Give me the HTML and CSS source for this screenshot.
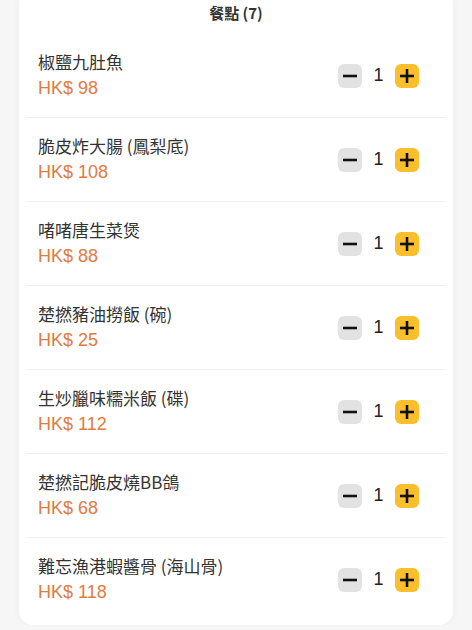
FILE: index.html
```html
<!DOCTYPE html>
<html lang="zh-Hant">
<head>
    <meta charset="UTF-8">
    <meta name="viewport" content="width=device-width, initial-scale=1.0">
    <title>餐點</title>
    <link rel="stylesheet" href="styles.css">
</head>
<body>
    <div class="card">
        <div class="card-title">餐點 (7)</div>
        <div class="item-list">
            <div class="item">
                <div class="item-info">
                    <div class="item-name">椒鹽九肚魚</div>
                    <div class="item-price">HK$ 98</div>
                </div>
                <div class="qty">
                    <button class="qty-btn minus"><svg width="14" height="14" viewBox="0 0 14 14"><line x1="0" y1="7" x2="14" y2="7"/></svg></button>
                    <span class="qty-num">1</span>
                    <button class="qty-btn plus"><svg width="14" height="14" viewBox="0 0 14 14"><line x1="0" y1="7" x2="14" y2="7"/><line x1="7" y1="0" x2="7" y2="14"/></svg></button>
                </div>
            </div>
            <div class="item">
                <div class="item-info">
                    <div class="item-name">脆皮炸大腸 (鳳梨底)</div>
                    <div class="item-price">HK$ 108</div>
                </div>
                <div class="qty">
                    <button class="qty-btn minus"><svg width="14" height="14" viewBox="0 0 14 14"><line x1="0" y1="7" x2="14" y2="7"/></svg></button>
                    <span class="qty-num">1</span>
                    <button class="qty-btn plus"><svg width="14" height="14" viewBox="0 0 14 14"><line x1="0" y1="7" x2="14" y2="7"/><line x1="7" y1="0" x2="7" y2="14"/></svg></button>
                </div>
            </div>
            <div class="item">
                <div class="item-info">
                    <div class="item-name">啫啫唐生菜煲</div>
                    <div class="item-price">HK$ 88</div>
                </div>
                <div class="qty">
                    <button class="qty-btn minus"><svg width="14" height="14" viewBox="0 0 14 14"><line x1="0" y1="7" x2="14" y2="7"/></svg></button>
                    <span class="qty-num">1</span>
                    <button class="qty-btn plus"><svg width="14" height="14" viewBox="0 0 14 14"><line x1="0" y1="7" x2="14" y2="7"/><line x1="7" y1="0" x2="7" y2="14"/></svg></button>
                </div>
            </div>
            <div class="item">
                <div class="item-info">
                    <div class="item-name">楚撚豬油撈飯 (碗)</div>
                    <div class="item-price">HK$ 25</div>
                </div>
                <div class="qty">
                    <button class="qty-btn minus"><svg width="14" height="14" viewBox="0 0 14 14"><line x1="0" y1="7" x2="14" y2="7"/></svg></button>
                    <span class="qty-num">1</span>
                    <button class="qty-btn plus"><svg width="14" height="14" viewBox="0 0 14 14"><line x1="0" y1="7" x2="14" y2="7"/><line x1="7" y1="0" x2="7" y2="14"/></svg></button>
                </div>
            </div>
            <div class="item">
                <div class="item-info">
                    <div class="item-name">生炒臘味糯米飯 (碟)</div>
                    <div class="item-price">HK$ 112</div>
                </div>
                <div class="qty">
                    <button class="qty-btn minus"><svg width="14" height="14" viewBox="0 0 14 14"><line x1="0" y1="7" x2="14" y2="7"/></svg></button>
                    <span class="qty-num">1</span>
                    <button class="qty-btn plus"><svg width="14" height="14" viewBox="0 0 14 14"><line x1="0" y1="7" x2="14" y2="7"/><line x1="7" y1="0" x2="7" y2="14"/></svg></button>
                </div>
            </div>
            <div class="item">
                <div class="item-info">
                    <div class="item-name">楚撚記脆皮燒BB鴿</div>
                    <div class="item-price">HK$ 68</div>
                </div>
                <div class="qty">
                    <button class="qty-btn minus"><svg width="14" height="14" viewBox="0 0 14 14"><line x1="0" y1="7" x2="14" y2="7"/></svg></button>
                    <span class="qty-num">1</span>
                    <button class="qty-btn plus"><svg width="14" height="14" viewBox="0 0 14 14"><line x1="0" y1="7" x2="14" y2="7"/><line x1="7" y1="0" x2="7" y2="14"/></svg></button>
                </div>
            </div>
            <div class="item">
                <div class="item-info">
                    <div class="item-name">難忘漁港蝦醬骨 (海山骨)</div>
                    <div class="item-price">HK$ 118</div>
                </div>
                <div class="qty">
                    <button class="qty-btn minus"><svg width="14" height="14" viewBox="0 0 14 14"><line x1="0" y1="7" x2="14" y2="7"/></svg></button>
                    <span class="qty-num">1</span>
                    <button class="qty-btn plus"><svg width="14" height="14" viewBox="0 0 14 14"><line x1="0" y1="7" x2="14" y2="7"/><line x1="7" y1="0" x2="7" y2="14"/></svg></button>
                </div>
            </div>
        </div>
    </div>
</body>
</html>
```

FILE: styles.css
```css
body {
    margin: 0;
    background-color: #f6f6f6;
    font-family: "Liberation Sans", "Noto Sans CJK TC", sans-serif;
    color: #333;
}
.card {
    margin: 0 19px;
    background-color: #fff;
    border-radius: 0 0 14px 14px;
    box-shadow: 0 0 8px rgba(0, 0, 0, 0.04);
    padding-bottom: 4px;
}
.card-title {
    text-align: center;
    font-family: "Noto Sans CJK TC", sans-serif;
    font-size: 15px;
    font-weight: bold;
    line-height: 22px;
    padding: 2px 0 10px;
    color: #333;
}
.item-list {
    margin: 0 7px;
}
.item {
    display: flex;
    align-items: center;
    justify-content: space-between;
    height: 83px;
    padding: 0 27px 0 12px;
    border-bottom: 1px solid #f1f1f1;
}
.item:last-child {
    border-bottom: none;
}
.item-name {
    font-family: "Noto Sans CJK TC", sans-serif;
    font-size: 17px;
    line-height: 22px;
    color: #333;
}
.item-price {
    margin-top: 3px;
    font-size: 18px;
    line-height: 25px;
    color: #e27b3f;
}
.qty {
    display: flex;
    align-items: center;
}
.qty-btn {
    width: 24px;
    height: 24px;
    border: none;
    border-radius: 6px;
    padding: 0;
    display: flex;
    align-items: center;
    justify-content: center;
}
.qty-btn svg {
    stroke: #111;
    stroke-width: 2.6;
}
.minus {
    background-color: #e2e2e2;
}
.plus {
    background-color: #fbbf2c;
}
.qty-num {
    width: 33px;
    text-align: center;
    font-size: 18px;
    color: #222;
}
```
